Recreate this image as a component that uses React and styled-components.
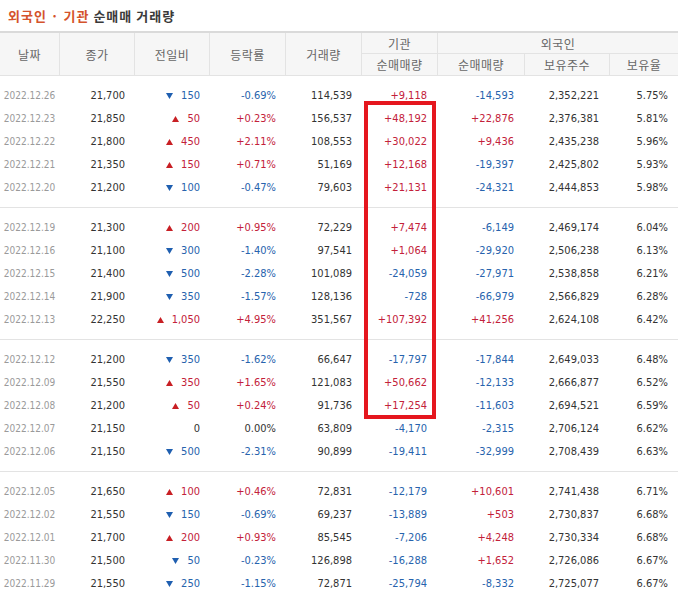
import React from "react";
import styled, { createGlobalStyle } from "styled-components";

const GlobalStyle = createGlobalStyle`
  html, body { margin: 0; padding: 0; background: #fff; }
  * { box-sizing: border-box; }
`;

const COLS = "59px 75px 75px 76px 76px 76px 87px 85px 69px";
const KR = `"Noto Sans CJK KR", "Noto Sans", sans-serif`;
const NUM = `"DejaVu Sans Condensed", Tahoma, "DejaVu Sans", sans-serif`;

const Page = styled.div`
  position: relative;
  width: 678px;
`;

const Title = styled.h3`
  margin: 0;
  height: 31px;
  padding-left: 8px;
  display: flex;
  align-items: center;
  font-family: ${KR};
  font-size: 13px;
  font-weight: 700;
  color: #3a3a3a;
  letter-spacing: 1px;
`;

const Accent = styled.span`
  color: #d4532c;
  margin-right: 4px;
`;

const Header = styled.div`
  display: grid;
  grid-template-columns: ${COLS};
  grid-template-rows: 21px 21px;
  border-top: 2px solid #dadada;
  border-bottom: 1px solid #e3e3e3;
  background: #f6f6f6;
`;

const HeadCell = styled.div`
  display: flex;
  align-items: center;
  justify-content: center;
  font-family: ${KR};
  font-size: 12px;
  color: #666;
  letter-spacing: 0.5px;
  border-left: ${(p) => (p.$first ? "none" : "1px solid #e3e3e3")};
  border-bottom: ${(p) => (p.$top ? "1px solid #e3e3e3" : "none")};
  grid-row: ${(p) => p.$row || "auto"};
  grid-column: ${(p) => p.$col || "auto"};
`;

const Group = styled.div`
  padding: 8px 0;
  & + & {
    border-top: 1px solid #e3e3e3;
  }
`;

const Row = styled.div`
  display: grid;
  grid-template-columns: ${COLS};
  height: 23px;
  align-items: center;
  & > div:nth-child(n + 6) {
    padding-right: 10px;
  }
`;

const toneColor = {
  up: "#c3213a",
  down: "#2763ad",
  flat: "#333",
};

const Cell = styled.div`
  font-family: ${NUM};
  font-size: 11px;
  color: ${(p) => toneColor[p.$tone || "flat"]};
  display: flex;
  align-items: center;
  justify-content: flex-end;
  padding-right: 9px;
  white-space: nowrap;
`;

const DateCell = styled.div`
  font-family: ${NUM};
  font-size: 10px;
  color: #9a9a9a;
  text-align: center;
`;

const ChangeCell = styled(Cell)`
  gap: 8px;
`;

const RedBox = styled.div`
  position: absolute;
  left: 364px;
  top: 101px;
  width: 72px;
  height: 318px;
  border: 4px solid #e5161e;
  pointer-events: none;
`;

const Arrow = ({ dir }) =>
  dir === "up" ? (
    <svg width="7" height="6" viewBox="0 0 7 6">
      <polygon points="3.5,0 7,6 0,6" fill="#c81f24" />
    </svg>
  ) : (
    <svg width="7" height="6" viewBox="0 0 7 6">
      <polygon points="0,0 7,0 3.5,6" fill="#1f5fb0" />
    </svg>
  );

const groups = [
  [
    ["2022.12.26", "21,700", "-150", "-0.69%", "114,539", "+9,118", "-14,593", "2,352,221", "5.75%"],
    ["2022.12.23", "21,850", "+50", "+0.23%", "156,537", "+48,192", "+22,876", "2,376,381", "5.81%"],
    ["2022.12.22", "21,800", "+450", "+2.11%", "108,553", "+30,022", "+9,436", "2,435,238", "5.96%"],
    ["2022.12.21", "21,350", "+150", "+0.71%", "51,169", "+12,168", "-19,397", "2,425,802", "5.93%"],
    ["2022.12.20", "21,200", "-100", "-0.47%", "79,603", "+21,131", "-24,321", "2,444,853", "5.98%"],
  ],
  [
    ["2022.12.19", "21,300", "+200", "+0.95%", "72,229", "+7,474", "-6,149", "2,469,174", "6.04%"],
    ["2022.12.16", "21,100", "-300", "-1.40%", "97,541", "+1,064", "-29,920", "2,506,238", "6.13%"],
    ["2022.12.15", "21,400", "-500", "-2.28%", "101,089", "-24,059", "-27,971", "2,538,858", "6.21%"],
    ["2022.12.14", "21,900", "-350", "-1.57%", "128,136", "-728", "-66,979", "2,566,829", "6.28%"],
    ["2022.12.13", "22,250", "+1,050", "+4.95%", "351,567", "+107,392", "+41,256", "2,624,108", "6.42%"],
  ],
  [
    ["2022.12.12", "21,200", "-350", "-1.62%", "66,647", "-17,797", "-17,844", "2,649,033", "6.48%"],
    ["2022.12.09", "21,550", "+350", "+1.65%", "121,083", "+50,662", "-12,133", "2,666,877", "6.52%"],
    ["2022.12.08", "21,200", "+50", "+0.24%", "91,736", "+17,254", "-11,603", "2,694,521", "6.59%"],
    ["2022.12.07", "21,150", "0", "0.00%", "63,809", "-4,170", "-2,315", "2,706,124", "6.62%"],
    ["2022.12.06", "21,150", "-500", "-2.31%", "90,899", "-19,411", "-32,999", "2,708,439", "6.63%"],
  ],
  [
    ["2022.12.05", "21,650", "+100", "+0.46%", "72,831", "-12,179", "+10,601", "2,741,438", "6.71%"],
    ["2022.12.02", "21,550", "-150", "-0.69%", "69,237", "-13,889", "+503", "2,730,837", "6.68%"],
    ["2022.12.01", "21,700", "+200", "+0.93%", "85,545", "-7,206", "+4,248", "2,730,334", "6.68%"],
    ["2022.11.30", "21,500", "-50", "-0.23%", "126,898", "-16,288", "+1,652", "2,726,086", "6.67%"],
    ["2022.11.29", "21,550", "-250", "-1.15%", "72,871", "-25,794", "-8,332", "2,725,077", "6.67%"],
  ],
];

const toneOf = (v) => (v.startsWith("+") ? "up" : v.startsWith("-") ? "down" : "flat");

const DataRow = ({ r }) => {
  const [date, close, chg, rate, vol, inst, frn, hold, ratio] = r;
  const t = toneOf(chg);
  return (
    <Row>
      <DateCell>{date}</DateCell>
      <Cell>{close}</Cell>
      <ChangeCell $tone={t}>
        {t !== "flat" && <Arrow dir={t} />}
        <span>{chg.replace(/^[+-]/, "")}</span>
      </ChangeCell>
      <Cell $tone={toneOf(rate)}>{rate}</Cell>
      <Cell>{vol}</Cell>
      <Cell $tone={toneOf(inst)}>{inst}</Cell>
      <Cell $tone={toneOf(frn)}>{frn}</Cell>
      <Cell>{hold}</Cell>
      <Cell>{ratio}</Cell>
    </Row>
  );
};

export default function App() {
  return (
    <>
      <GlobalStyle />
      <Page>
        <Title>
          <Accent>외국인 · 기관</Accent>순매매 거래량
        </Title>
        <Header>
          <HeadCell $first $row="1 / 3">날짜</HeadCell>
          <HeadCell $row="1 / 3">종가</HeadCell>
          <HeadCell $row="1 / 3">전일비</HeadCell>
          <HeadCell $row="1 / 3">등락률</HeadCell>
          <HeadCell $row="1 / 3">거래량</HeadCell>
          <HeadCell $top $row="1" $col="6">기관</HeadCell>
          <HeadCell $top $row="1" $col="7 / 10">외국인</HeadCell>
          <HeadCell $row="2" $col="6">순매매량</HeadCell>
          <HeadCell $row="2" $col="7">순매매량</HeadCell>
          <HeadCell $row="2" $col="8">보유주수</HeadCell>
          <HeadCell $row="2" $col="9">보유율</HeadCell>
        </Header>
        {groups.map((g, i) => (
          <Group key={i}>
            {g.map((r) => (
              <DataRow key={r[0]} r={r} />
            ))}
          </Group>
        ))}
        <RedBox />
      </Page>
    </>
  );
}
